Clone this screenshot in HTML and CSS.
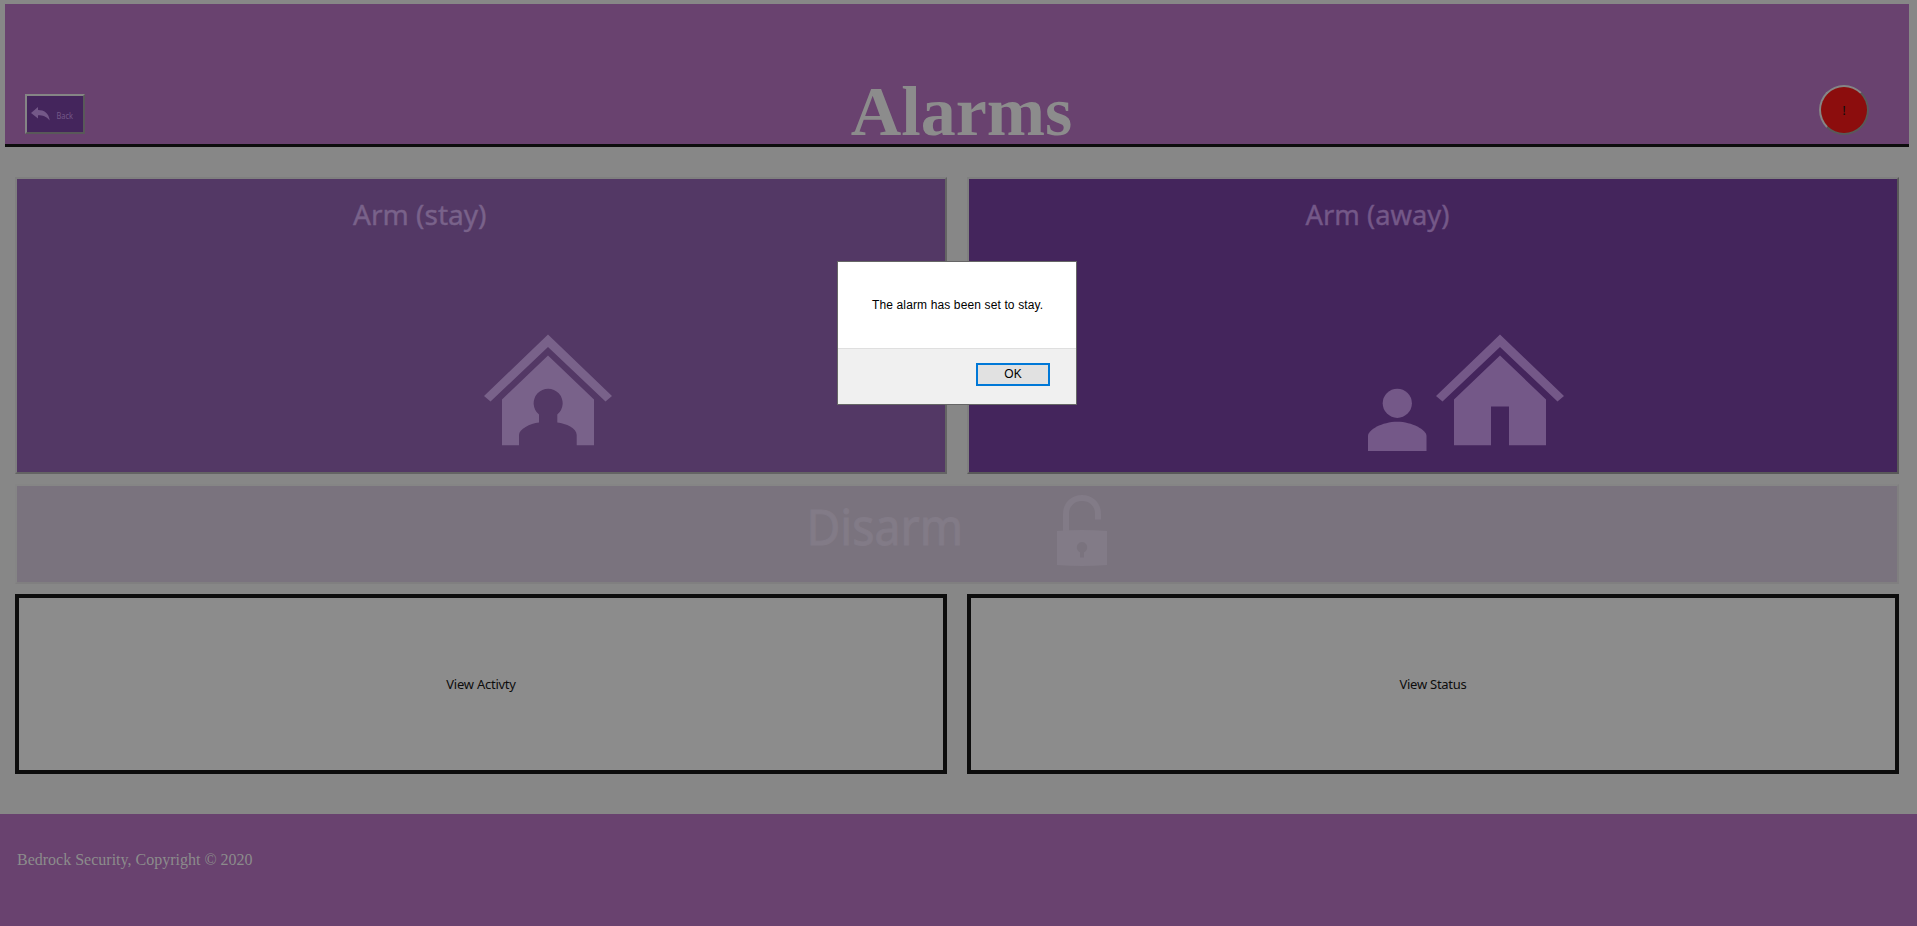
FILE: index.html
```html
<!DOCTYPE html>
<html lang="en">
<head>
<meta charset="utf-8">
<title>Alarms</title>
<link rel="stylesheet" href="styles.css">
</head>
<body>
<header class="header">
  <button class="back" aria-label="Back">
    <svg width="56" height="36" viewBox="0 0 56 36">
      <path class="light" d="M4 17 L11 11 V14 C17 14 22 17 22.700 24.500 C19 20 16 19.200 11 19.200 V22.500 Z"/>
      <text class="light" x="29.500" y="22.500" font-size="8" textLength="16.500" lengthAdjust="spacingAndGlyphs">Back</text>
    </svg>
  </button>
  <h1 class="title">Alarms</h1>
  <button class="panic">!</button>
</header>
<main class="grid">
  <button class="tile stay">
    <svg width="928" height="293" viewBox="17 179 928 293">
      <text class="label" x="353" y="225.300" font-size="27.500" textLength="133.500" lengthAdjust="spacingAndGlyphs">Arm (stay)</text>
      <path d="M548 334.500 L612 396 L605.500 401.500 L548 347 L490.500 401.500 L484 396 Z"/>
      <path d="M548 355.500 L594 399.500 V445.300 H576.700 V435 C576.700 428 566 423.500 557.300 422.500 V414.500 A14.500 14.500 0 1 0 539 414.500 V422.500 C530 423.500 519 429 519 435 V445.300 H502 V399.500 Z"/>
    </svg>
  </button>
  <button class="tile away">
    <svg width="928" height="293" viewBox="969 179 928 293">
      <text class="label" x="1305.500" y="225.300" font-size="27.500" textLength="144" lengthAdjust="spacingAndGlyphs">Arm (away)</text>
      <path d="M1500 334.500 L1564 396 L1557.500 401.500 L1500 347 L1442.500 401.500 L1436 396 Z"/>
      <path d="M1500 355.500 L1546 399.500 V445.300 H1509 V406.500 H1491 V445.300 H1454 V399.500 Z"/>
      <circle cx="1397.300" cy="403.300" r="14.600"/>
      <path d="M1368 451 V436 C1368 430 1382 421.800 1397.300 421.800 C1412 421.800 1426.500 430 1426.500 436 V451 Z"/>
    </svg>
  </button>
  <button class="tile disarm">
    <svg width="1880" height="96" viewBox="17 486 1880 96">
      <text class="label-large" x="806.500" y="544.700" font-size="48.500" textLength="156.500" lengthAdjust="spacingAndGlyphs">Disarm</text>
      <path class="shackle" d="M1066 532 V514 C1066 492.500 1098 492.500 1098 514 V519.500"/>
      <path fill-rule="evenodd" d="M1057 531 Q1082 529 1107 531 V565 Q1082 567 1057 565 Z M1080 557.500 H1084 V552.300 A5.300 5.300 0 1 0 1080 552.300 Z"/>
    </svg>
  </button>
  <button class="view">View Activty</button>
  <button class="view">View Status</button>
</main>
<footer class="footer">Bedrock Security, Copyright © 2020</footer>
<div class="dialog" role="alertdialog">
  <p class="message">The alarm has been set to stay.</p>
  <div class="actions"><button class="ok">OK</button></div>
</div>
</body>
</html>
```

FILE: styles.css
```css
* { box-sizing: border-box; }
body { margin: 0; height: 926px; overflow: hidden; background: #878787; display: flex; flex-direction: column; }
button { margin: 0; padding: 0; }
svg { display: block; }
svg text { font-family: "Noto Sans", sans-serif; }
.header { height: 143px; margin: 4px 8px 0 5px; padding: 0 40px 0 20px; background: #69426f; border-bottom: 3px solid #0d0d0d; display: grid; grid-template-columns: 60px 1fr 50px; align-items: end; }
.back { width: 60px; height: 40px; margin-bottom: 10px; background: #44255c; border: 2px solid; border-color: #858585 #595959 #595959 #858585; }
.light { fill: #745888; }
.title { margin: 0 0 -8px; padding-left: 19px; text-align: center; font: bold 70px/80px "Liberation Serif", serif; color: #8c8c8c; }
.panic { width: 50px; height: 50px; margin-bottom: 9px; border-radius: 50%; background: #8c0d0d; border: 2px solid; border-color: #858585 #595959 #595959 #858585; font: 13.333px "Noto Sans", sans-serif; color: #0d0d0d; }
.grid { margin: 30px 18px 40px 15px; display: grid; grid-template-columns: 1fr 1fr; grid-template-rows: 297px 100px 180px; gap: 10px 20px; }
.tile { border: 2px solid; overflow: hidden; }
.stay { background: #533865; border-color: #7f7f7f #646464 #646464 #7f7f7f; fill: #79628a; stroke: none; }
.away { background: #44255c; border-color: #7f7f7f #595959 #595959 #7f7f7f; fill: #745888; }
.label { stroke-width: .4; }
.stay .label { stroke: #79628a; }
.away .label { stroke: #745888; }
.disarm { grid-column: span 2; background: #7a737e; border-color: #858585 #807f80 #807f80 #858585; fill: #827b87; }
.label-large { stroke: #827b87; stroke-width: 1; }
.shackle { fill: none; stroke: #827b87; stroke-width: 6; }
.view { background: #8c8c8c; border: 4px solid #0d0d0d; font: 13px "Noto Sans", sans-serif; letter-spacing: -.25px; color: #0d0d0d; }
.footer { height: 112px; padding: 36px 17px; background: #69426f; font: 16px/20px "Liberation Serif", serif; color: #8c8c8c; }
.dialog { position: absolute; left: 837px; top: 261px; width: 240px; height: 144px; background: #fff; border: 1px solid #666; display: flex; flex-direction: column; font: 12px "Liberation Sans", sans-serif; color: #000; }
.message { margin: 0; padding: 35px 0 0 34px; height: 86px; line-height: 16px; white-space: nowrap; letter-spacing: .13px; }
.actions { flex: 1; background: #f0f0f0; border-top: 1px solid #dfdfdf; padding: 14px 26px 0 0; display: flex; justify-content: flex-end; }
.ok { width: 74px; height: 23px; background: #e1e1e1; border: 2px solid #0078d7; padding-bottom: 2px; font: 12px "Liberation Sans", sans-serif; color: #000; }
```
